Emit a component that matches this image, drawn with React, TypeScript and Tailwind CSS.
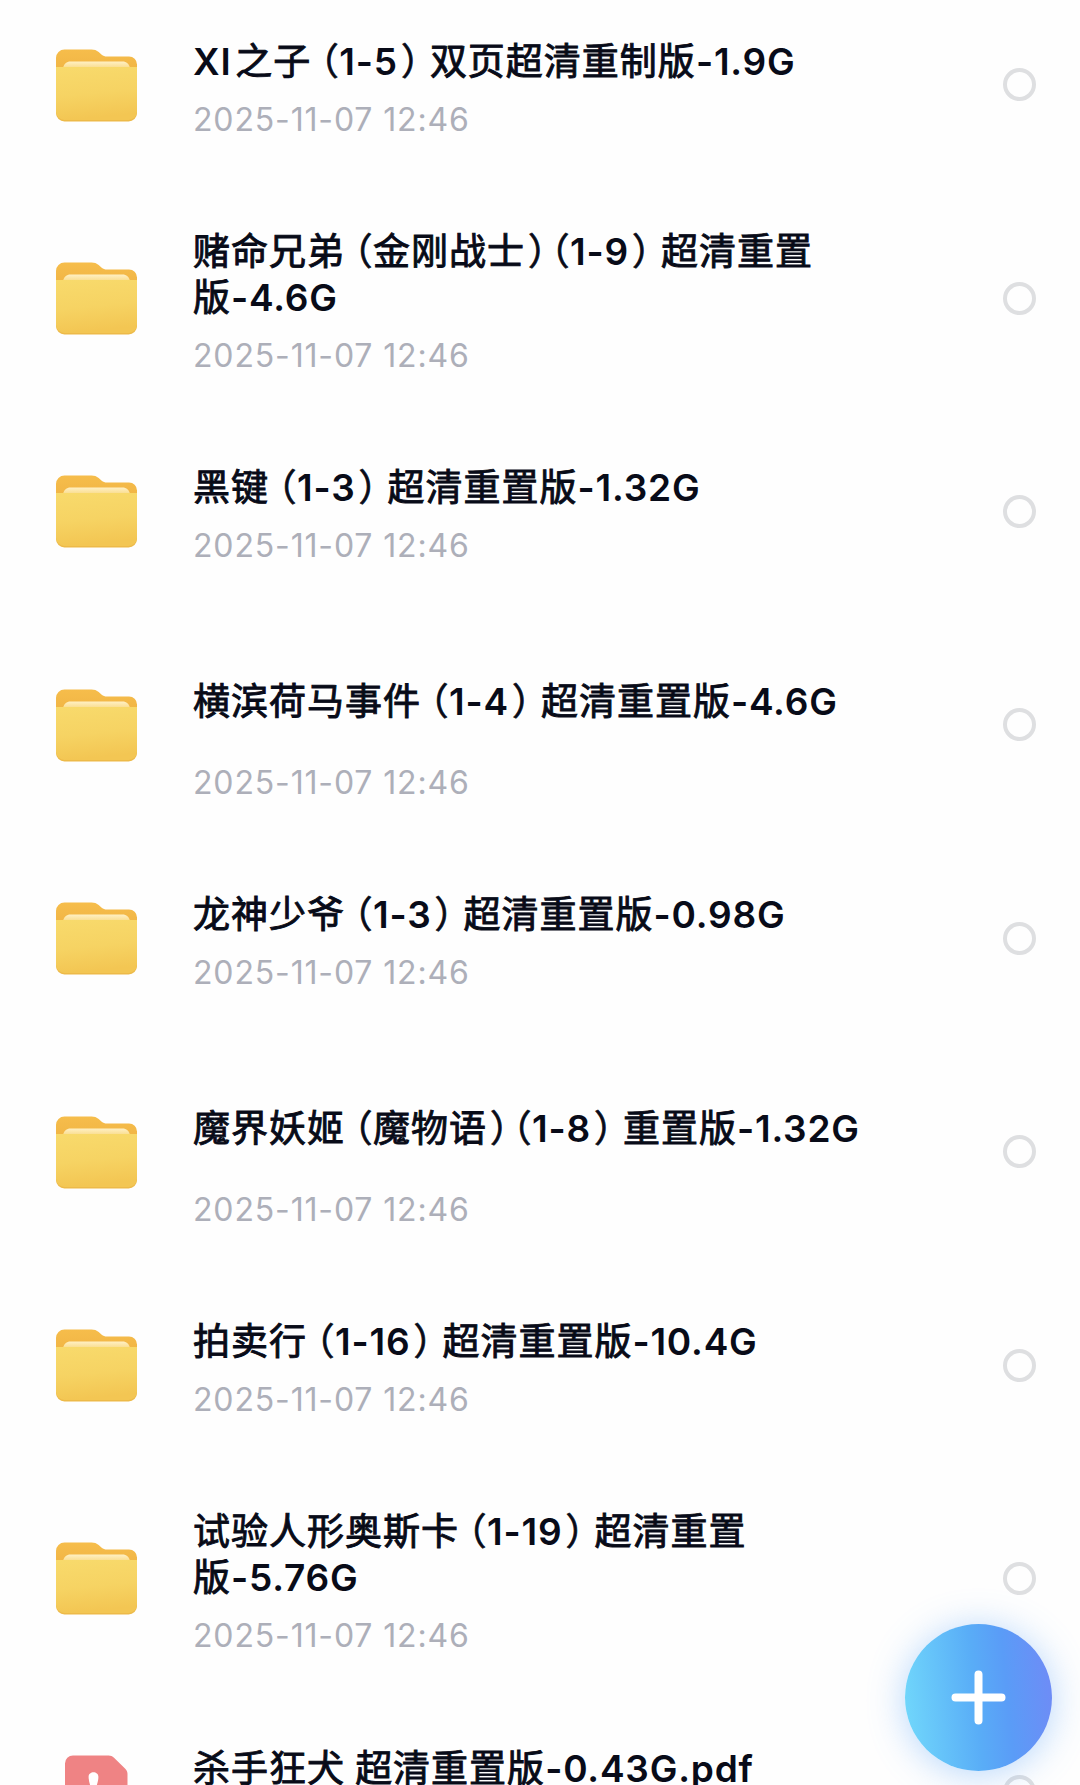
type FileItem = {
  lines: string[];
  kind: "folder" | "pdf";
  // keeps the two-line title height even when the title fits on one line
  tall?: boolean;
};

const DATE = "2025-11-07 12:46";

const FILES: FileItem[] = [
  { lines: ["XI\u200A之子（1-5）双页超清重制版-1.9G"], kind: "folder" },
  { lines: ["赌命兄弟（金刚战士）（1-9）超清重置", "版-4.6G"], kind: "folder" },
  { lines: ["黑键（1-3）超清重置版-1.32G"], kind: "folder" },
  { lines: ["横滨荷马事件（1-4）超清重置版-4.6G"], kind: "folder", tall: true },
  { lines: ["龙神少爷（1-3）超清重置版-0.98G"], kind: "folder" },
  { lines: ["魔界妖姬（魔物语）（1-8）重置版-1.32G"], kind: "folder", tall: true },
  { lines: ["拍卖行（1-16）超清重置版-10.4G"], kind: "folder" },
  { lines: ["试验人形奥斯卡（1-19）超清重置", "版-5.76G"], kind: "folder" },
  { lines: ["杀手狂犬 超清重置版-0.43G.pdf"], kind: "pdf" },
];

function FolderIcon() {
  return (
    <svg width="83" height="74" viewBox="0 0 83 74" fill="none">
      <defs>
        <linearGradient id="folderBack" x1="0" y1="0" x2="0" y2="1">
          <stop offset="0" stopColor="#f6bd4b" />
          <stop offset="1" stopColor="#efb243" />
        </linearGradient>
        <linearGradient id="folderPaper" x1="0" y1="0" x2="0" y2="1">
          <stop offset="0" stopColor="#fff0c4" />
          <stop offset="1" stopColor="#f9dc8c" />
        </linearGradient>
        <linearGradient id="folderFront" x1="0" y1="0" x2="0.15" y2="1">
          <stop offset="0" stopColor="#f8da6c" />
          <stop offset="0.55" stopColor="#f6d363" />
          <stop offset="1" stopColor="#f3c653" />
        </linearGradient>
      </defs>
      <path
        d="M1 30V10a8.500 8.500 0 0 1 8.500-8.500h27c3 0 5 .8 7.200 2.600l3 2.600c1.500 1.200 3 1.800 5.300 1.800h22a8 8 0 0 1 8 8V30Z"
        fill="url(#folderBack)"
      />
      <path d="M8 20c1-4.200 3.500-6.500 7.500-6.500h52c4 0 6.500 2.300 7.500 6.500Z" fill="url(#folderPaper)" />
      <path d="M1 19h81v46a8.500 8.500 0 0 1-8.500 8.500h-64A8.500 8.500 0 0 1 1 65Z" fill="#edba49" />
      <path d="M1 19h81v44.500a8.500 8.500 0 0 1-8.500 8.500h-64A8.500 8.500 0 0 1 1 63.500Z" fill="url(#folderFront)" />
    </svg>
  );
}

function PdfIcon() {
  return (
    <svg width="83" height="74" viewBox="0 0 83 74" fill="none">
      <path
        d="M10 8.500A8 8 0 0 1 18 .5h35.500c2.200 0 4 .8 5.500 2.200l11 10.800c1.600 1.600 2.500 3.300 2.500 5.500v46.500a8 8 0 0 1-8 8H18a8 8 0 0 1-8-8Z"
        fill="#ef8384"
      />
      <path d="M39 35c2 6 8 11 18 13M38 35c-2 7-7 14-14 18" stroke="#fff" strokeWidth="4" strokeLinecap="round" />
      <path d="M33.600 21.800c0-6.200 9.800-6.200 9.800 0 0 4.500-1.800 8-3 14.200h-3.800c-1.200-5.500-3-9.700-3-14.200Z" fill="#fff" />
    </svg>
  );
}

const CJK = "font-['Noto_Sans_CJK_SC'] font-normal [-webkit-text-stroke:0.9px_#080b18]";
const PAREN =
  "inline-block font-['Noto_Sans_CJK_SC'] font-normal tracking-normal [font-feature-settings:'halt'] [-webkit-text-stroke:0.7px_#080b18]";

function TitleLine({ text }: { text: string }) {
  const parts = text.split(/(（|）|[\u4e00-\u9fff]+)/).filter(Boolean);

  return (
    <span className="block h-[46px] whitespace-pre">
      {parts.map((part, i) => {
        if (part === "（") {
          // an opening bracket right after a closing one gives up its left gap
          const gap = parts[i - 1] === "）" ? "w-[20px] -ml-[7px] pl-[1px]" : "w-[28px] pl-[9px]";
          return (
            <span key={i} className={`${PAREN} ${gap}`}>
              {part}
            </span>
          );
        }
        if (part === "）") {
          return (
            <span key={i} className={`${PAREN} w-[32px] pl-[3px]`}>
              {part}
            </span>
          );
        }
        return (
          <span key={i} className={/[\u4e00-\u9fff]/.test(part) ? `${CJK} tracking-[1px]` : "tracking-[0.8px]"}>
            {part}
          </span>
        );
      })}
    </span>
  );
}

function FileRow({ file }: { file: FileItem }) {
  return (
    <li className="flex h-[213.4px] items-center pr-[44px] pl-[55px]">
      <div className="w-[83px] shrink-0">{file.kind === "folder" ? <FolderIcon /> : <PdfIcon />}</div>
      <div className="ml-[55px] flex-1 pt-[7px]">
        <h2
          className={`flex flex-col justify-center text-[37px] leading-[46px] font-semibold text-[#080b18] ${
            file.tall ? "h-[92px]" : ""
          }`}
        >
          {file.lines.map((line) => (
            <TitleLine key={line} text={line} />
          ))}
        </h2>
        <p className="mt-[16px] h-[43px] text-[32px] leading-[43px] tracking-[0.85px] text-[#adafb9]">{DATE}</p>
      </div>
      <span className="size-[33px] shrink-0 rounded-full border-4 border-[#dedfe1]" />
    </li>
  );
}

export default function App() {
  return (
    <main className="relative h-[1785px] w-[1080px] overflow-hidden bg-[#fefefe] font-[Inter,'Noto_Sans_CJK_SC',sans-serif]">
      <ul className="-mt-[22px]">
        {FILES.map((file) => (
          <FileRow key={file.lines[0]} file={file} />
        ))}
      </ul>

      {/* Floating add button */}
      <button
        aria-label="add"
        className="absolute top-[1624px] left-[905px] grid size-[147px] place-items-center rounded-full bg-[linear-gradient(84deg,#70d6fb_4%,#59adf7_48%,#5a9cf7_68%,#6e8cf6_96%)] shadow-[0_3px_36px_rgba(84,160,248,0.42)]"
      >
        <svg width="55" height="55" viewBox="0 0 55 55" stroke="#fff" strokeWidth="8" strokeLinecap="round">
          <path d="M27.500 4.500v46M4.500 27.500h46" />
        </svg>
      </button>
    </main>
  );
}
